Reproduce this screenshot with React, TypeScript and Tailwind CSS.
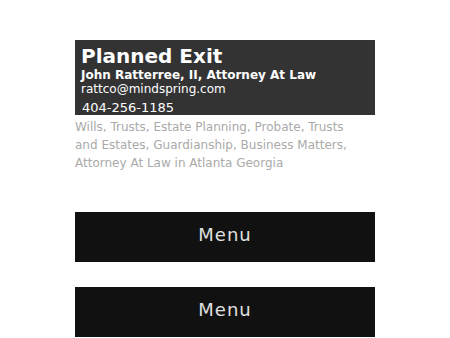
export default function App() {
  return (
    <div className="min-h-[338px] bg-white" style={{ fontFamily: '"DejaVu Sans", Verdana, sans-serif' }}>
      <div className="mx-auto w-[300px] pt-10">
        <div className="h-[75px] bg-[#333333] px-[6px] pt-[4px] text-white">
          <h1 className="text-[20px] font-bold leading-[24px]">Planned Exit</h1>
          <p className="text-[12px] font-bold leading-[14px]">John Ratterree, II, Attorney At Law</p>
          <p className="text-[12px] leading-[15px]">rattco@mindspring.com</p>
          <p className="mt-[3px] pl-[1px] text-[13px] leading-[16px]">404-256-1185</p>
        </div>
        <p className="mt-[3px] w-[280px] text-[12px] leading-[18px] text-[#aaaaaa]">
          Wills, Trusts, Estate Planning, Probate, Trusts and Estates, Guardianship, Business Matters, Attorney At Law in Atlanta Georgia
        </p>
        <div className="mt-[40px] flex h-[50px] items-center justify-center bg-[#111111] pb-[6px] text-[18px] tracking-[1px] text-[#e0e0e0]">
          Menu
        </div>
        <div className="mt-[25px] flex h-[50px] items-center justify-center bg-[#111111] pb-[6px] text-[18px] tracking-[1px] text-[#e0e0e0]">
          Menu
        </div>
      </div>
    </div>
  );
}
